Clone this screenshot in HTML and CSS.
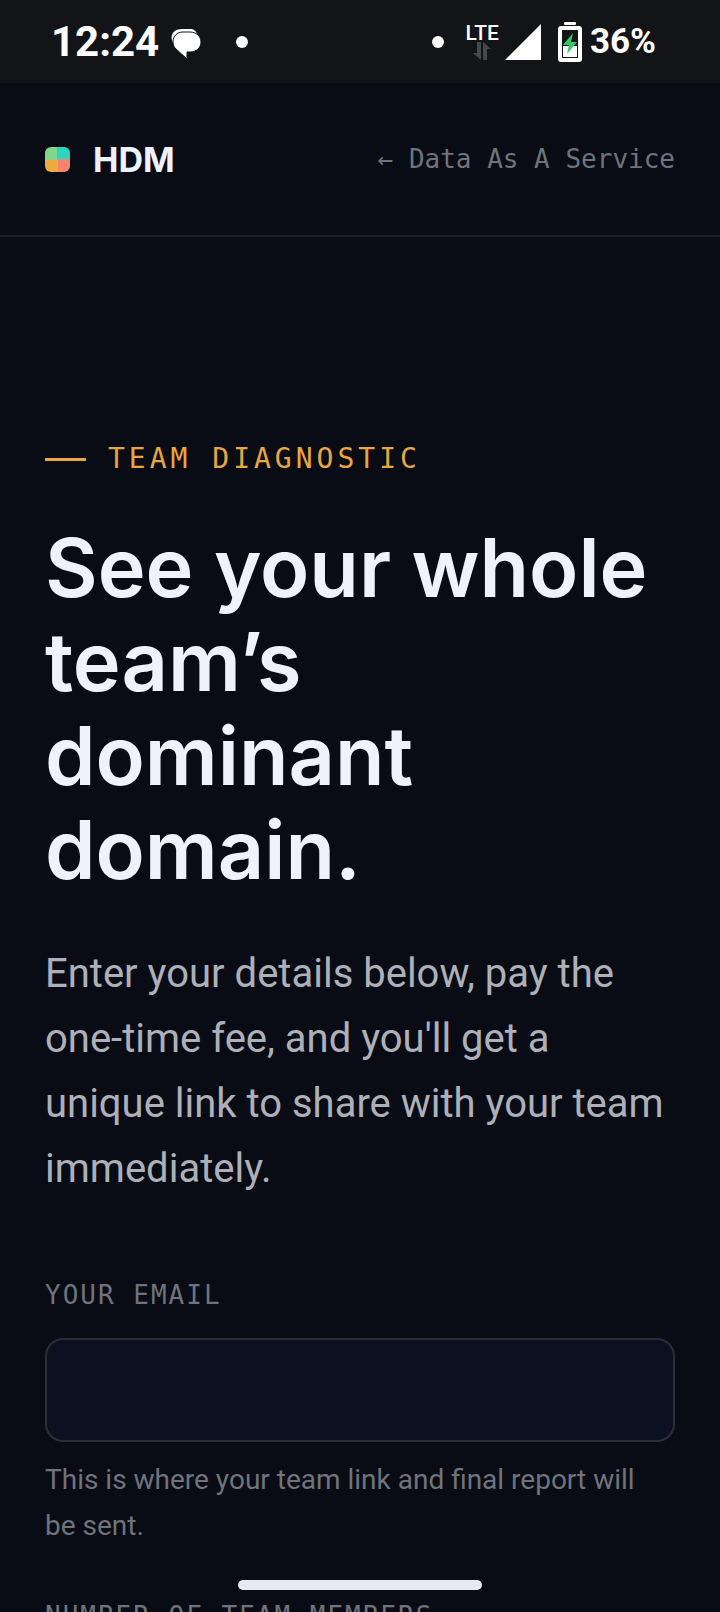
FILE: index.html
```html
<!DOCTYPE html>
<html lang="en">
<head>
  <meta charset="UTF-8">
  <meta name="viewport" content="width=device-width, initial-scale=1.0">
  <title>HDM - Team Diagnostic</title>
  <link rel="stylesheet" href="styles.css">
</head>
<body>
  <div class="status-bar">
    <div class="status-group">
      <span class="clock">12:24</span>
      <svg class="chat-icon" width="32" height="32" viewBox="0 0 32 32">
        <path d="M3 15C-1 7 4 1 12 1h8c4 0 6 2 7 5z" fill="#fff"/>
        <path d="M13 4h7c6 0 11 4 11 10s-5 10-11 10h-3v7L6 21c-2-2-3-4-3-7 0-6 4-10 10-10z" fill="#fff" stroke="#121418"/>
      </svg>
      <span class="dot"></span>
    </div>
    <div class="status-group">
      <span class="dot"></span>
      <div class="network">
        <span>LTE</span>
        <svg width="18" height="18" viewBox="0 0 18 18">
          <path d="M4 0h4v18L0 11h4zM10 18V0l8 7h-4v11z" fill="#45474b"/>
        </svg>
      </div>
      <svg class="signal" width="36" height="36" viewBox="0 0 36 36">
        <path d="M36 0v36H0z" fill="#fff"/>
      </svg>
      <svg class="battery" width="24" height="40" viewBox="0 0 24 40">
        <rect x="6" y="0" width="12" height="3" rx="1" fill="#fff"/>
        <rect x="2" y="6" width="20" height="32" rx="1" fill="none" stroke="#fff" stroke-width="4"/>
        <path d="M5 24h14v11H5z" fill="#fff"/>
        <path d="M15 11L5 23h6l-2 9 10-12h-6z" fill="#2fcb66"/>
      </svg>
      <span class="percent">36%</span>
    </div>
  </div>

  <header class="header">
    <a class="brand" href="#">
      <span class="brand-mark"></span>
      HDM
    </a>
    <a class="back-link" href="#">← Data As A Service</a>
  </header>

  <main class="main">
    <p class="eyebrow">TEAM DIAGNOSTIC</p>
    <h1>See your whole team’s dominant domain.</h1>
    <p class="lead">Enter your details below, pay the one-time fee, and you'll get a unique link to share with your team immediately.</p>

    <form class="form">
      <div class="field">
        <label for="email">YOUR EMAIL</label>
        <input type="email" id="email" aria-describedby="email-hint">
        <p class="hint" id="email-hint">This is where your team link and final report will be sent.</p>
      </div>
      <div class="field">
        <label for="members">NUMBER OF TEAM MEMBERS</label>
        <input type="number" id="members" min="2">
      </div>
    </form>
  </main>

  <div class="home-indicator"></div>
</body>
</html>
```

FILE: styles.css
```css
* {
  box-sizing: border-box;
}

body {
  margin: 0;
  height: 100vh;
  overflow: hidden;
  background-color: #090c14;
  color: #eff1fc;
  font-family: Roboto, sans-serif;
}

h1,
p {
  margin: 0;
}

a {
  color: inherit;
  text-decoration: none;
}

/* Status bar */
.status-bar {
  display: flex;
  justify-content: space-between;
  align-items: center;
  height: 83px;
  padding: 0 64px 0 51px;
  background-color: #121418;
  color: #fff;
}

.status-group {
  display: flex;
  align-items: center;
}

.clock {
  font-size: 42px;
  font-weight: 700;
}

.chat-icon {
  margin: 4px 34px 0 11px;
}

.dot {
  width: 12px;
  height: 12px;
  border-radius: 50%;
  background-color: #fff;
}

.network {
  display: flex;
  flex-direction: column;
  align-items: center;
  margin: 0 6px 0 22px;
  font-size: 21px;
  font-weight: 500;
  line-height: 18px;
}

.battery {
  margin: 0 8px 0 17px;
}

.percent {
  font-size: 35px;
  font-weight: 700;
}

/* Header */
.header {
  display: flex;
  justify-content: space-between;
  align-items: center;
  height: 154px;
  padding: 0 45px;
  border-bottom: 2px solid #1c1f26;
}

.brand {
  display: flex;
  align-items: center;
  gap: 23px;
  font-family: Inter, sans-serif;
  font-size: 34px;
  font-weight: 700;
}

.brand-mark {
  width: 25px;
  height: 25px;
  border-radius: 6px;
  background: conic-gradient(#2dd4bf 25%, #f5846c 0 50%, #f0a93c 0 75%, #80d68b 0);
}

.back-link {
  color: #70737b;
  font-family: "DejaVu Sans Mono", monospace;
  font-size: 26px;
}

/* Content */
.main {
  padding: 200px 45px 0;
}

.eyebrow {
  display: flex;
  align-items: center;
  gap: 22px;
  color: #e9a63f;
  font-family: "DejaVu Sans Mono", monospace;
  font-size: 28px;
  line-height: 44px;
  letter-spacing: 4px;
}

.eyebrow::before {
  content: "";
  width: 41px;
  height: 3px;
  background-color: #e9a63f;
}

h1 {
  margin-top: 40px;
  font-family: Inter, sans-serif;
  font-size: 81px;
  font-weight: 600;
  line-height: 94px;
}

.lead {
  margin-top: 44px;
  color: #adb0b8;
  font-size: 40px;
  line-height: 65px;
}

.form {
  margin-top: 72px;
}

.field {
  margin-bottom: 45px;
}

.field label {
  display: block;
  color: #70737b;
  font-family: "DejaVu Sans Mono", monospace;
  font-size: 26px;
  line-height: 44px;
  letter-spacing: 2px;
}

.field input {
  display: block;
  width: 100%;
  height: 104px;
  margin-top: 21px;
  padding: 0 28px;
  border: 2px solid #2b2e37;
  border-radius: 18px;
  background-color: #0b1120;
  color: #eff1fc;
  font-family: inherit;
  font-size: 32px;
}

.hint {
  margin-top: 15px;
  padding-right: 16px;
  color: #70737b;
  font-size: 28px;
  line-height: 46px;
}

/* Gesture handle lies over the page */
.home-indicator {
  position: fixed;
  bottom: 22px;
  left: 50%;
  width: 244px;
  height: 10px;
  margin-left: -122px;
  border-radius: 5px;
  background-color: #e6e9f2;
}
```
